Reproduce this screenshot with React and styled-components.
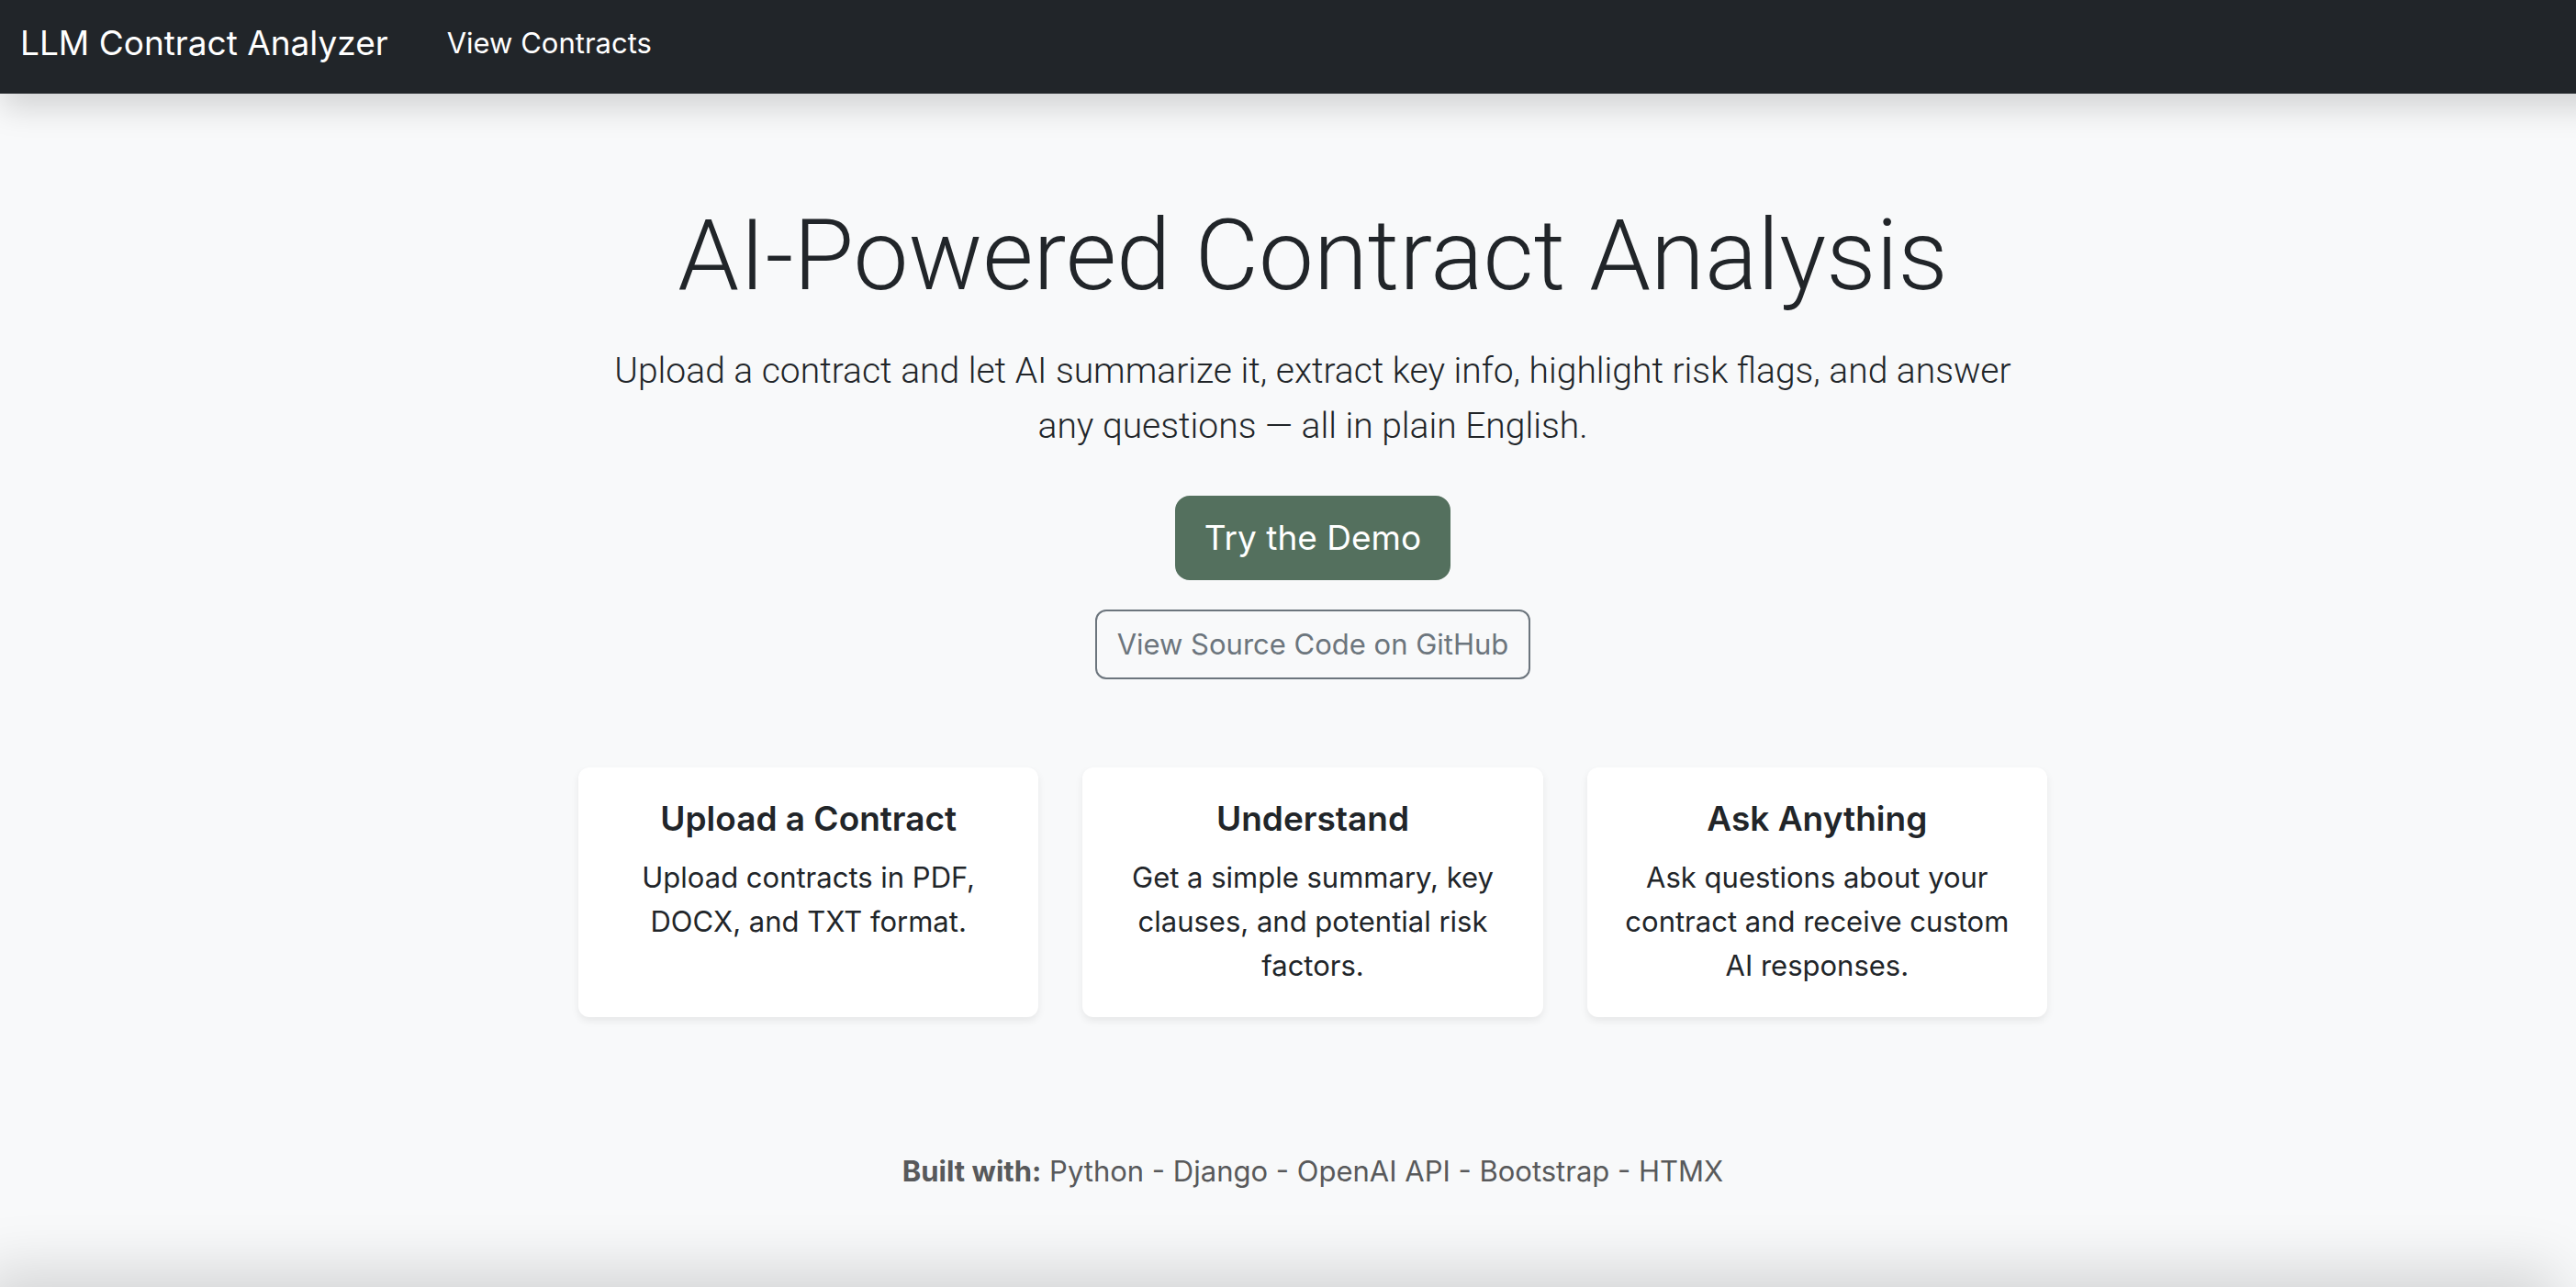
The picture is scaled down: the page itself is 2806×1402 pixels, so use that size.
import React from 'react';
import styled, { createGlobalStyle } from 'styled-components';

const GlobalStyle = createGlobalStyle`
  *, *::before, *::after { box-sizing: border-box; }
  body {
    margin: 0;
    background: #f8f9fa;
    color: #212529;
    font-family: Inter, "Liberation Sans", sans-serif;
    font-size: 31px;
    line-height: 48px;
  }
`;

const Page = styled.div`
  display: flex;
  flex-direction: column;
  height: 100vh;
  overflow-x: hidden;
  overflow-y: auto;
  scrollbar-width: none;
`;

const Navbar = styled.nav`
  display: flex;
  flex-shrink: 0;
  align-items: center;
  gap: 64px;
  height: 102px;
  padding: 0 22px 8px;
  background: #212529;
  box-shadow: 18px 0 32px 16px rgba(0, 0, 0, 0.15);
`;

const NavLink = styled.a`
  color: #fff;
  font-size: ${(p) => (p.$brand ? '37px' : '31px')};
  text-decoration: none;
`;

const Main = styled.main`
  display: flex;
  flex: 1 0 auto;
  flex-direction: column;
  align-items: center;
  padding: 110px 0 104px 54px;
  text-align: center;
`;

const Title = styled.h1`
  margin: 0 0 28px;
  font-family: Roboto, Inter, sans-serif;
  font-size: 107px;
  font-weight: 300;
  line-height: 134px;
`;

const Lead = styled.p`
  max-width: 1600px;
  margin: 0 0 46px;
  padding: 0 24px;
  font-family: Roboto, Inter, sans-serif;
  font-size: 39px;
  font-weight: 300;
  line-height: 60px;
`;

const Actions = styled.div`
  display: flex;
  flex-direction: column;
  align-items: center;
  gap: 32px;
  margin-bottom: 96px;
`;

const ButtonLink = styled.a`
  display: block;
  padding: ${(p) => (p.$primary ? '16px 30px' : '12px 22px')};
  border: 2px solid ${(p) => (p.$primary ? '#54705e' : '#6c757d')};
  border-radius: ${(p) => (p.$primary ? '16px' : '12px')};
  background: ${(p) => (p.$primary ? '#54705e' : 'transparent')};
  color: ${(p) => (p.$primary ? '#fff' : '#6c757d')};
  font-size: ${(p) => (p.$primary ? '37px' : '31px')};
  line-height: ${(p) => (p.$primary ? '56px' : '48px')};
  text-decoration: none;
`;

const Cards = styled.div`
  display: grid;
  grid-template-columns: repeat(3, 1fr);
  gap: 48px;
  width: 100%;
  max-width: 1600px;
`;

const Card = styled.section`
  padding: 32px;
  border-radius: 12px;
  background: #fff;
  box-shadow: 0 4px 8px rgba(0, 0, 0, 0.075);
`;

const CardTitle = styled.h2`
  margin: 0 0 16px;
  font-size: 37px;
  font-weight: 600;
  line-height: 48px;
`;

const CardText = styled.p`
  margin: 0;
`;

const BuiltWith = styled.p`
  margin: 144px 0 0;
  color: #58595b;
`;

const Footer = styled.footer`
  flex-shrink: 0;
  height: 102px;
  background: #212529;
  box-shadow: -20px -20px 64px rgba(0, 0, 0, 0.15);
`;

const cards = [
  { title: 'Upload a Contract', text: 'Upload contracts in PDF, DOCX, and TXT format.' },
  { title: 'Understand', text: 'Get a simple summary, key clauses, and potential risk factors.' },
  { title: 'Ask Anything', text: 'Ask questions about your contract and receive custom AI responses.' },
];

export default function App() {
  return (
    <Page>
      <GlobalStyle />
      <Navbar>
        <NavLink $brand href="#home">LLM Contract Analyzer</NavLink>
        <NavLink href="#contracts">View Contracts</NavLink>
      </Navbar>
      <Main>
        <Title>AI-Powered Contract Analysis</Title>
        <Lead>
          Upload a contract and let AI summarize it, extract key info, highlight risk flags, and
          answer any questions — all in plain English.
        </Lead>
        <Actions>
          <ButtonLink $primary href="#demo">Try the Demo</ButtonLink>
          <ButtonLink href="#source">View Source Code on GitHub</ButtonLink>
        </Actions>
        <Cards>
          {cards.map((card) => (
            <Card key={card.title}>
              <CardTitle>{card.title}</CardTitle>
              <CardText>{card.text}</CardText>
            </Card>
          ))}
        </Cards>
        <BuiltWith>
          <strong>Built with:</strong> Python - Django - OpenAI API - Bootstrap - HTMX
        </BuiltWith>
      </Main>
      <Footer />
    </Page>
  );
}
